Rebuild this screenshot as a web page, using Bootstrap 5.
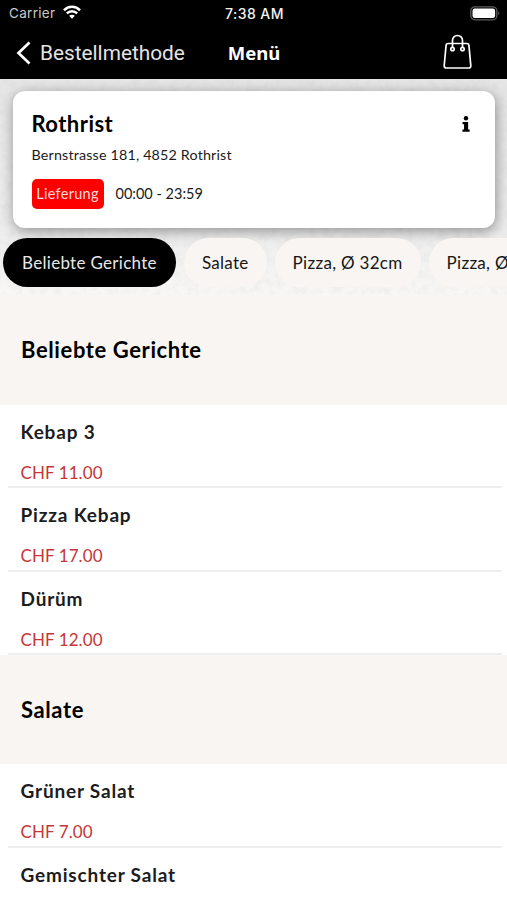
<!DOCTYPE html>
<html lang="de">
<head>
<meta charset="utf-8">
<meta name="viewport" content="width=device-width, initial-scale=1">
<title>Menü</title>
<link href="https://cdn.jsdelivr.net/npm/bootstrap@5.3.0/dist/css/bootstrap.min.css" rel="stylesheet">
<style>
  body { font-family: Lato, "Open Sans", sans-serif; height: 900px; color: #000; }
  .ios { font-family: Inter, "Liberation Sans", sans-serif; }
  .topbar { height: 79px; }
  .statusbar { height: 27px; font-size: 13.5px; line-height: 27px; display: grid; grid-template-columns: 1fr auto 1fr; padding: 0 7px 0 9px; color: #f2f2f2; }
  .carrier { color: #c8c8c8; letter-spacing: .3px; }
  .clock { font-size: 14px; letter-spacing: .45px; }
  .navline { height: 52px; display: grid; grid-template-columns: 1fr auto 1fr; padding: 0 35px 0 16px; }
  .back { font-family: Roboto, sans-serif; font-size: 20.8px; color: #e4e4e4; }
  .back-text { padding-top: 2px; }
  .navtitle { font-family: "Noto Sans", sans-serif; font-size: 18.5px; margin-left: 20px; }
  .bag { padding-bottom: 3px; }
  .hero { height: 216px; background: #e4e4e4; }
  .texture { inset: 0; width: 100%; height: 100%; }
  .store { margin: 12px 12.5px 0 13px; height: 137px; border-radius: 12px; padding: 19px 25px 0 18.5px; box-shadow: 1px 3px 14px rgba(0,0,0,.4); }
  .store-name { font-size: 22px; line-height: 28px; letter-spacing: .45px; }
  .address { font-size: 14.3px; line-height: 20px; margin-top: 7px; letter-spacing: .17px; color: #1b1b1b; }
  .service { height: 30px; margin-top: 14px; }
  .tag { background: #f00; width: 72px; height: 30px; border-radius: 5px; font-size: 14.5px; color: #ffdada; letter-spacing: .3px; }
  .hours { font-size: 14.5px; color: #1b1b1b; }
  .tabs { margin: 10px 0 0 3px; gap: 8px; }
  .tab { height: 49px; border-radius: 24.5px; background: #f8f5f2; font-size: 17px; letter-spacing: .3px; color: #161616; padding: 0 18px; }
  .tab.current { background: #000; color: #e8e8e8; padding: 0 19px; }
  .section-title { background: #f8f5f2; height: 110px; padding-left: 21px; font-size: 22px; letter-spacing: .6px; }
  .section-title.later { height: 109.5px; padding-top: 1px; }
  .dish { height: 83.3px; margin: 0 5px 0 8px; padding: 14px 0 0 12.5px; border-bottom: 2px solid #eeeeef; }
  .dish-name { font-size: 19px; line-height: 26px; letter-spacing: .82px; color: #1c1c20; }
  .price { font-size: 17px; line-height: 24px; margin-top: 16px; letter-spacing: .08px; color: #c53638; }
</style>
<script src="https://cdn.jsdelivr.net/npm/bootstrap@5.3.0/dist/js/bootstrap.bundle.min.js"></script>
</head>
<body class="bg-white overflow-hidden">
<header class="topbar bg-black text-white">
  <div class="statusbar ios">
    <div class="d-flex align-items-center carrier">Carrier
      <svg class="ms-2 mb-1" width="18" height="14" viewBox="0 0 19 14" fill="none" stroke="#fff" stroke-width="2.6"><path d="M1 5.200C5.700.3 13.300.3 18 5.200M4 8.500c3.100-3.100 7.900-3.100 11 0"/><path d="M9.500 14L6.500 11c1.700-1.500 4.300-1.500 6 0z" fill="#fff" stroke="none"/></svg>
    </div>
    <div class="clock fw-medium">7:38 AM</div>
    <div class="d-flex align-items-center justify-content-end">
      <svg width="30" height="15" viewBox="0 0 30 15"><rect x=".8" y=".8" width="26" height="13" rx="4" fill="none" stroke="#5c5c5c" stroke-width="1.300"/><rect x="2.500" y="2.500" width="22.600" height="9.600" rx="2.400" fill="#fff"/><path d="M28.300 5.300q2 2 0 4z" fill="#666"/></svg>
    </div>
  </div>
  <nav class="navline align-items-center">
    <div class="d-flex align-items-center back">
      <svg class="me-2" width="16" height="24" viewBox="0 0 16 24" fill="none" stroke="#fff" stroke-width="2.700"><path d="M13.500 1.500L2.500 12l11 10.500"/></svg><span class="back-text">Bestellmethode</span>
    </div>
    <div class="navtitle fw-bold">Menü</div>
    <div class="bag d-flex justify-content-end">
      <svg width="29" height="35" viewBox="0 0 29 35" fill="none" stroke="#fff" stroke-width="1.700"><path d="M5 9.500h19q1.700 0 1.900 1.700l1.900 20.300q.2 2.500-2.200 2.500H3.400q-2.400 0-2.200-2.500L3.100 11.200Q3.300 9.500 5 9.500z"/><path d="M9.500 13.500V6.500a5 5 0 0 1 10 0v7"/><circle cx="9.500" cy="15" r="1.700"/><circle cx="19.500" cy="15" r="1.700"/></svg>
    </div>
  </nav>
</header>

<section class="hero position-relative overflow-hidden">
  <svg class="texture position-absolute">
    <defs>
      <filter id="grain" x="0" y="0" width="100%" height="100%"><feTurbulence type="fractalNoise" baseFrequency=".13" numOctaves="4" seed="8"/><feColorMatrix type="matrix" values="0 0 0 0 .45  0 0 0 0 .45  0 0 0 0 .45  .9 0 0 0 -.36"/></filter>
      <linearGradient id="fade" x2="0" y2="1"><stop offset="0" stop-color="#e6e6e6"/><stop offset=".7" stop-color="#ededed"/><stop offset="1" stop-color="#f8f7f6"/></linearGradient>
    </defs>
    <rect width="100%" height="100%" fill="url(#fade)"/>
    <rect width="100%" height="100%" filter="url(#grain)" opacity=".28"/>
  </svg>
  <div class="position-relative">
    <div class="store bg-white">
      <div class="d-flex justify-content-between align-items-center">
        <div class="store-name fw-bold">Rothrist</div>
        <svg width="8" height="18" viewBox="0 0 9 18"><circle cx="4.500" cy="2.600" r="2.500"/><path d="M.6 6.700h6.300v8.400h1.700v2.700H.5v-2.700h1.800V9.400H.6z"/></svg>
      </div>
      <div class="address">Bernstrasse 181, 4852 Rothrist</div>
      <div class="service d-flex align-items-center">
        <span class="tag d-flex align-items-center justify-content-center">Lieferung</span>
        <span class="hours ms-2 ps-1">00:00 - 23:59</span>
      </div>
    </div>
    <div class="tabs d-flex flex-nowrap">
      <button class="tab current btn border-0 flex-shrink-0">Beliebte Gerichte</button>
      <button class="tab btn border-0 flex-shrink-0">Salate</button>
      <button class="tab btn border-0 flex-shrink-0">Pizza, Ø 32cm</button>
      <button class="tab btn border-0 flex-shrink-0">Pizza, Ø 40cm</button>
    </div>
  </div>
</section>

<main>
  <h2 class="section-title d-flex align-items-center fw-bold mb-0">Beliebte Gerichte</h2>
  <div class="dish"><div class="dish-name fw-bold">Kebap 3</div><div class="price">CHF 11.00</div></div>
  <div class="dish"><div class="dish-name fw-bold">Pizza Kebap</div><div class="price">CHF 17.00</div></div>
  <div class="dish"><div class="dish-name fw-bold">Dürüm</div><div class="price">CHF 12.00</div></div>
  <h2 class="section-title later d-flex align-items-center fw-bold mb-0">Salate</h2>
  <div class="dish"><div class="dish-name fw-bold">Grüner Salat</div><div class="price">CHF 7.00</div></div>
  <div class="dish border-0"><div class="dish-name fw-bold">Gemischter Salat</div></div>
</main>
</body>
</html>
